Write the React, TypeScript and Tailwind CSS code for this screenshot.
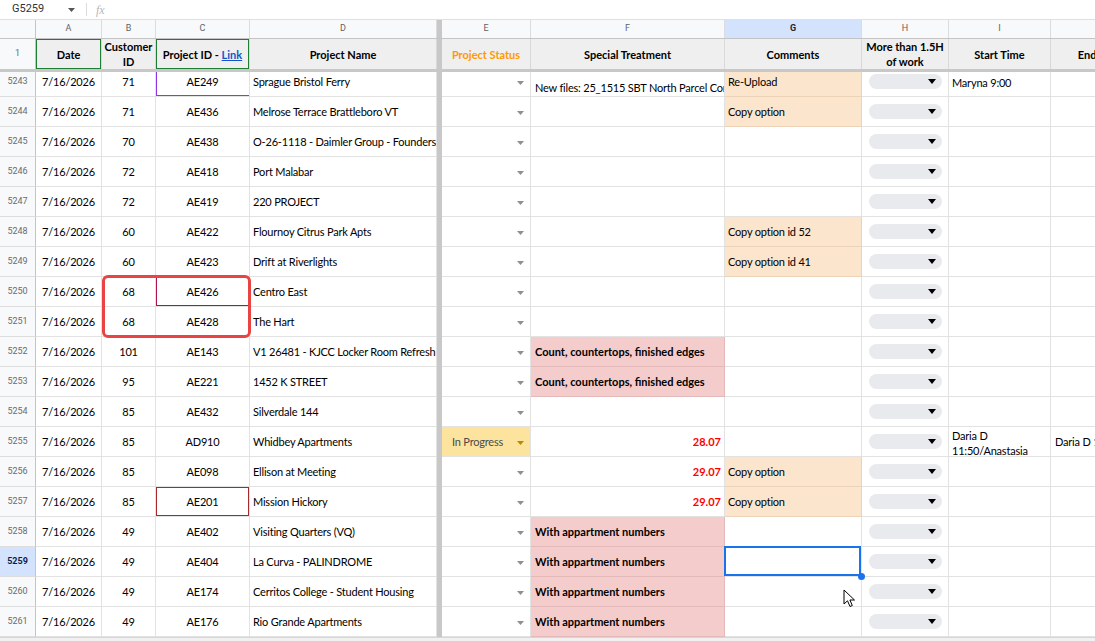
import React from "react";

const GRID =
  "grid grid-cols-[36px_66px_54px_94px_187px_5px_89px_194px_137px_87px_102px_100px]";

type FKind = "note" | "pink" | "red";
interface Row {
  n: number;
  b: string;
  c: string;
  cb?: string;
  d: string;
  e?: boolean;
  f?: string;
  fk?: FKind;
  g?: string;
  i?: string[];
  j?: string;
  sel?: boolean;
}

const rows: Row[] = [
  { n: 5243, b: "71", c: "AE249", cb: "shadow-[inset_1px_-1px_0_0_#9334e6]", d: "Sprague Bristol Ferry", f: "New files: 25_1515 SBT North Parcel Corridor", fk: "note", g: "Re-Upload", i: ["Maryna 9:00"] },
  { n: 5244, b: "71", c: "AE436", d: "Melrose Terrace Brattleboro VT", g: "Copy option" },
  { n: 5245, b: "70", c: "AE438", d: "O-26-1118 - Daimler Group - Founders Square" },
  { n: 5246, b: "72", c: "AE418", d: "Port Malabar" },
  { n: 5247, b: "72", c: "AE419", d: "220 PROJECT" },
  { n: 5248, b: "60", c: "AE422", d: "Flournoy Citrus Park Apts", g: "Copy option id 52" },
  { n: 5249, b: "60", c: "AE423", d: "Drift at Riverlights", g: "Copy option id 41" },
  { n: 5250, b: "68", c: "AE426", cb: "shadow-[inset_0_0_0_1px_#ad1457]", d: "Centro East" },
  { n: 5251, b: "68", c: "AE428", d: "The Hart" },
  { n: 5252, b: "101", c: "AE143", d: "V1 26481 - KJCC Locker Room Refresh", f: "Count, countertops, finished edges", fk: "pink" },
  { n: 5253, b: "95", c: "AE221", d: "1452 K STREET", f: "Count, countertops, finished edges", fk: "pink" },
  { n: 5254, b: "85", c: "AE432", d: "Silverdale 144" },
  { n: 5255, b: "85", c: "AD910", d: "Whidbey Apartments", e: true, f: "28.07", fk: "red", i: ["Daria D", "11:50/Anastasia"], j: "Daria D 11:50" },
  { n: 5256, b: "85", c: "AE098", d: "Ellison at Meeting", f: "29.07", fk: "red", g: "Copy option" },
  { n: 5257, b: "85", c: "AE201", cb: "shadow-[inset_0_0_0_1px_#a52a2a]", d: "Mission Hickory", f: "29.07", fk: "red", g: "Copy option" },
  { n: 5258, b: "49", c: "AE402", d: "Visiting Quarters (VQ)", f: "With appartment numbers", fk: "pink" },
  { n: 5259, b: "49", c: "AE404", d: "La Curva - PALINDROME", f: "With appartment numbers", fk: "pink", sel: true },
  { n: 5260, b: "49", c: "AE174", d: "Cerritos College - Student Housing", f: "With appartment numbers", fk: "pink" },
  { n: 5261, b: "49", c: "AE176", d: "Rio Grande Apartments", f: "With appartment numbers", fk: "pink" },
];

function SmallTri({ className }: { className: string }) {
  return (
    <svg width="7" height="4" viewBox="0 0 7 4" className={className}>
      <path d="M0 0h7L3.5 4z" fill="currentColor" />
    </svg>
  );
}

function Chip() {
  return (
    <div className="ml-[7px] flex h-[15px] w-[73px] items-center justify-end rounded-full bg-[#e8eaed] pr-[6px]">
      <svg width="8" height="5" viewBox="0 0 8 5" className="text-black">
        <path d="M0 0h8L4 5z" fill="currentColor" />
      </svg>
    </div>
  );
}

const BASE = "flex items-center border-r border-b overflow-hidden whitespace-nowrap pt-[2px]";

function DataRow({ r }: { r: Row }) {
  let fCls = `${BASE} border-[#e2e2e2]`;
  if (r.fk === "note") fCls = `${BASE} border-[#e2e2e2] !items-end pb-0 pl-[4px] leading-[16px]`;
  if (r.fk === "pink") fCls = `${BASE} border-[#e4b9b9] bg-[#f4cccc] pl-[4px] font-bold tracking-normal`;
  if (r.fk === "red") fCls = `${BASE} border-[#e2e2e2] justify-end pr-[3px] font-bold text-[#ff0000] tracking-normal`;

  let gCls = `${BASE} border-[#e2e2e2]`;
  if (r.g) gCls = `${BASE} border-[#ecd3b7] bg-[#fce5cd] pl-[3px]`;
  if (r.sel) gCls = "relative flex items-center border-r border-b border-[#e2e2e2]";

  return (
    <div className={`${GRID} h-[30px] text-[11px] tracking-[-0.2px] text-black`}>
      <div
        className={`flex items-center justify-center border-r border-b border-r-[#c4c4c4] border-b-[#dedede] font-[family-name:Roboto,sans-serif] text-[9px] tracking-normal ${
          r.sel ? "bg-[#d3e3fd] font-bold text-[#0b1f44]" : "bg-[#f8f9fa] text-[#6b6b6b]"
        }`}
      >
        {r.n}
      </div>
      <div className={`${BASE} border-[#e2e2e2] justify-center`}>7/16/2026</div>
      <div className={`${BASE} border-[#e2e2e2] justify-center`}>{r.b}</div>
      <div className={`${BASE} border-[#e2e2e2] justify-center ${r.cb ?? ""}`}>{r.c}</div>
      <div className={`${BASE} border-[#e2e2e2] pl-[3px]`}>{r.d}</div>
      <div className="bg-[#c8c8c8]" />
      {r.e ? (
        <div className={`${BASE} border-[#e2e2e2] justify-between bg-[#fde49e] pl-[10px] pr-[6px] text-[#4a4a4a]`}>
          <span>In Progress</span>
          <SmallTri className="text-[#b38a00]" />
        </div>
      ) : (
        <div className={`${BASE} border-[#e2e2e2] justify-end pr-[6px]`}>
          <SmallTri className="text-[#8f8f8f]" />
        </div>
      )}
      <div className={fCls}>{r.f}</div>
      <div className={gCls}>
        {r.g}
        {r.sel && (
          <>
            <div className="absolute -left-px -top-px right-0 bottom-0 border-2 border-[#1a73e8]" />
            <div className="absolute -bottom-[4px] -right-[4px] h-[7px] w-[7px] rounded-full bg-[#1a73e8]" />
          </>
        )}
      </div>
      <div className={`${BASE} border-[#e2e2e2] !pt-0`}>
        <Chip />
      </div>
      <div className={`${BASE} border-[#e2e2e2] flex-col !items-start justify-center pl-[3px] leading-[15px]`}>
        {r.i?.map((t) => (
          <span key={t}>{t}</span>
        ))}
      </div>
      <div className={`${BASE} border-[#e2e2e2] pl-[4px]`}>{r.j}</div>
    </div>
  );
}

function HCell({ children, className = "" }: { children?: React.ReactNode; className?: string }) {
  return (
    <div className={`flex items-center justify-center overflow-hidden whitespace-nowrap text-center leading-[15px] border-r border-[#d9d9d9] ${className}`}>
      {children}
    </div>
  );
}

export default function App() {
  const letters = ["A", "B", "C", "D", "", "E", "F", "G", "H", "I", "J"];
  return (
    <div className="relative h-[641px] w-[1095px] overflow-hidden bg-white font-[family-name:Lato,sans-serif]">
      {/* formula bar */}
      <div className="flex h-[20px] items-center border-b border-[#e0e0e0] bg-white font-[family-name:Roboto,sans-serif]">
        <span className="ml-[12px] w-[52px] text-[11px] text-[#333]">G5259</span>
        <svg width="7" height="4" viewBox="0 0 7 4" className="ml-[4px] text-[#555]">
          <path d="M0 0h7L3.5 4z" fill="currentColor" />
        </svg>
        <div className="ml-[11px] h-[13px] w-px bg-[#dadce0]" />
        <span className="ml-[9px] font-[family-name:'Liberation_Serif',serif] text-[12px] italic text-[#b8b8b8]">fx</span>
      </div>

      {/* column letters */}
      <div className={`${GRID} h-[19px] border-b border-[#c4c4c4] bg-[#f8f9fa] font-[family-name:Roboto,sans-serif] text-[9px] text-[#5f6368]`}>
        <div className="border-r border-[#c4c4c4]" />
        {letters.map((l, idx) =>
          l === "" ? (
            <div key={idx} className="bg-[#c8c8c8]" />
          ) : (
            <div
              key={idx}
              className={`flex items-center justify-center border-r border-[#dadce0] ${
                l === "G" ? "bg-[#d3e3fd] font-bold text-[#1f1f1f]" : ""
              }`}
            >
              {l === "J" ? "" : l}
            </div>
          )
        )}
      </div>

      {/* header row 1 */}
      <div className={`${GRID} h-[30px] bg-[#efefef] text-[11px] font-bold text-black`}>
        <div className="flex items-center justify-center border-r border-[#c4c4c4] bg-[#f8f9fa] font-[family-name:Roboto,sans-serif] text-[9px] font-normal text-[#6b6b6b]">
          1
        </div>
        <HCell className="shadow-[inset_0_0_0_1px_#1e7e34]">Date</HCell>
        <HCell>
          Customer
          <br />
          ID
        </HCell>
        <HCell className="shadow-[inset_0_0_0_1px_#1e7e34]">
          <span>
            Project ID -{" "}
            <span className="text-[#1155cc] underline">Link</span>
          </span>
        </HCell>
        <HCell>Project Name</HCell>
        <div className="bg-[#c8c8c8]" />
        <HCell className="text-[#ff9900]">Project Status</HCell>
        <HCell>Special Treatment</HCell>
        <HCell>Comments</HCell>
        <HCell>
          More than 1.5H
          <br />
          of work
        </HCell>
        <HCell>Start Time</HCell>
        <HCell>End Time</HCell>
      </div>

      {/* frozen divider */}
      <div className="h-[3px] bg-[#c8c8c8]" />

      {/* data viewport */}
      <div className="h-[565px] overflow-hidden">
        <div className="-mt-[5px]">
          {rows.map((r) => (
            <DataRow key={r.n} r={r} />
          ))}
        </div>
      </div>

      {/* bottom strip */}
      <div className="h-[10px] border-t border-[#d6d6d6] bg-[#f1f1f1]" />

      {/* annotation box */}
      <div className="absolute left-[102px] top-[275px] h-[63px] w-[149px] rounded-[6px] border-[3px] border-[#ea4343]" />

      {/* mouse cursor */}
      <svg width="14" height="20" viewBox="0 0 14 20" className="absolute left-[843px] top-[589px]">
        <path
          d="M1 1 L1 15 L4.5 11.8 L7 17.5 L9.3 16.5 L6.9 11 L11.5 11 Z"
          fill="white"
          stroke="black"
          strokeWidth="1"
          strokeLinejoin="round"
        />
      </svg>
    </div>
  );
}
